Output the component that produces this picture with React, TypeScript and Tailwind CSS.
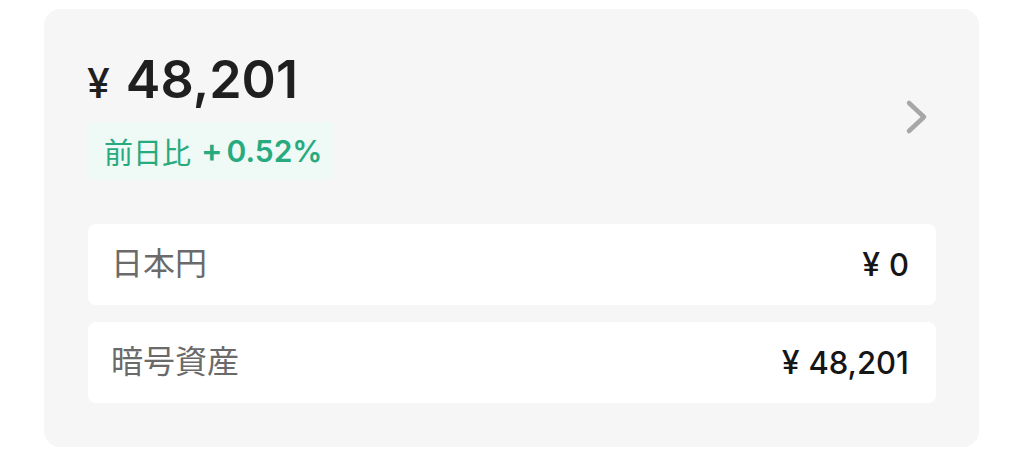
import React from "react";

const latin = "font-['Inter','Noto_Sans_CJK_JP',sans-serif]";
const cjk = "font-['Noto_Sans_CJK_JP','Noto_Sans',sans-serif]";

function Chevron() {
  return (
    <svg width="24" height="36" viewBox="0 0 24 36" className="mr-[7px]">
      <path
        d="M4 4 L19 18 L4 32"
        fill="none"
        stroke="#a7a7a7"
        strokeWidth="4.5"
        strokeLinecap="round"
        strokeLinejoin="round"
      />
    </svg>
  );
}

function Row({ label, value }: { label: string; value: string }) {
  return (
    <div className="flex h-[81px] items-center justify-between rounded-[8px] bg-white pl-[23px] pr-[27px]">
      <span className={`${cjk} pb-[8px] text-[32px] leading-none text-[#6a6a6a]`}>{label}</span>
      <span className={`${latin} flex items-baseline text-[31px] font-medium leading-none text-[#161616]`}>
        <span className="mr-[9px] text-[32px]">¥</span>
        <span>{value}</span>
      </span>
    </div>
  );
}

export default function App() {
  return (
    <div className="min-h-[455px] w-[1024px] bg-white pt-[9px]">
      <div className="ml-[44px] flex h-[438px] w-[935px] flex-col rounded-[16px] bg-[#f6f6f6] pl-[44px] pr-[43px] pt-[45px]">
        <div className="flex items-center justify-between">
          <div className="flex flex-col items-start">
            <div className={`${latin} flex h-[54px] items-baseline leading-none text-[#1f1f1f]`}>
              <span className="ml-[-1px] mr-[16px] text-[41px] font-medium">¥</span>
              <span className="text-[52px] font-semibold">48,201</span>
            </div>
            <div className="mt-[14px] flex h-[58px] items-center rounded-[4px] bg-[#eff9f5] pl-[16px] pr-[12px]">
              <span className={`${cjk} text-[29px] leading-none text-[#27ab7e]`}>前日比</span>
              <span className={`${latin} ml-[10px] flex items-baseline text-[30px] font-semibold leading-none text-[#27ab7e]`}>
                <span className="mr-[4px] text-[32px]">+</span>
                <span>0.52%</span>
              </span>
            </div>
          </div>
          <Chevron />
        </div>
        <div className="mt-[44px] flex flex-col gap-[17px]">
          <Row label="日本円" value="0" />
          <Row label="暗号資産" value="48,201" />
        </div>
      </div>
    </div>
  );
}
